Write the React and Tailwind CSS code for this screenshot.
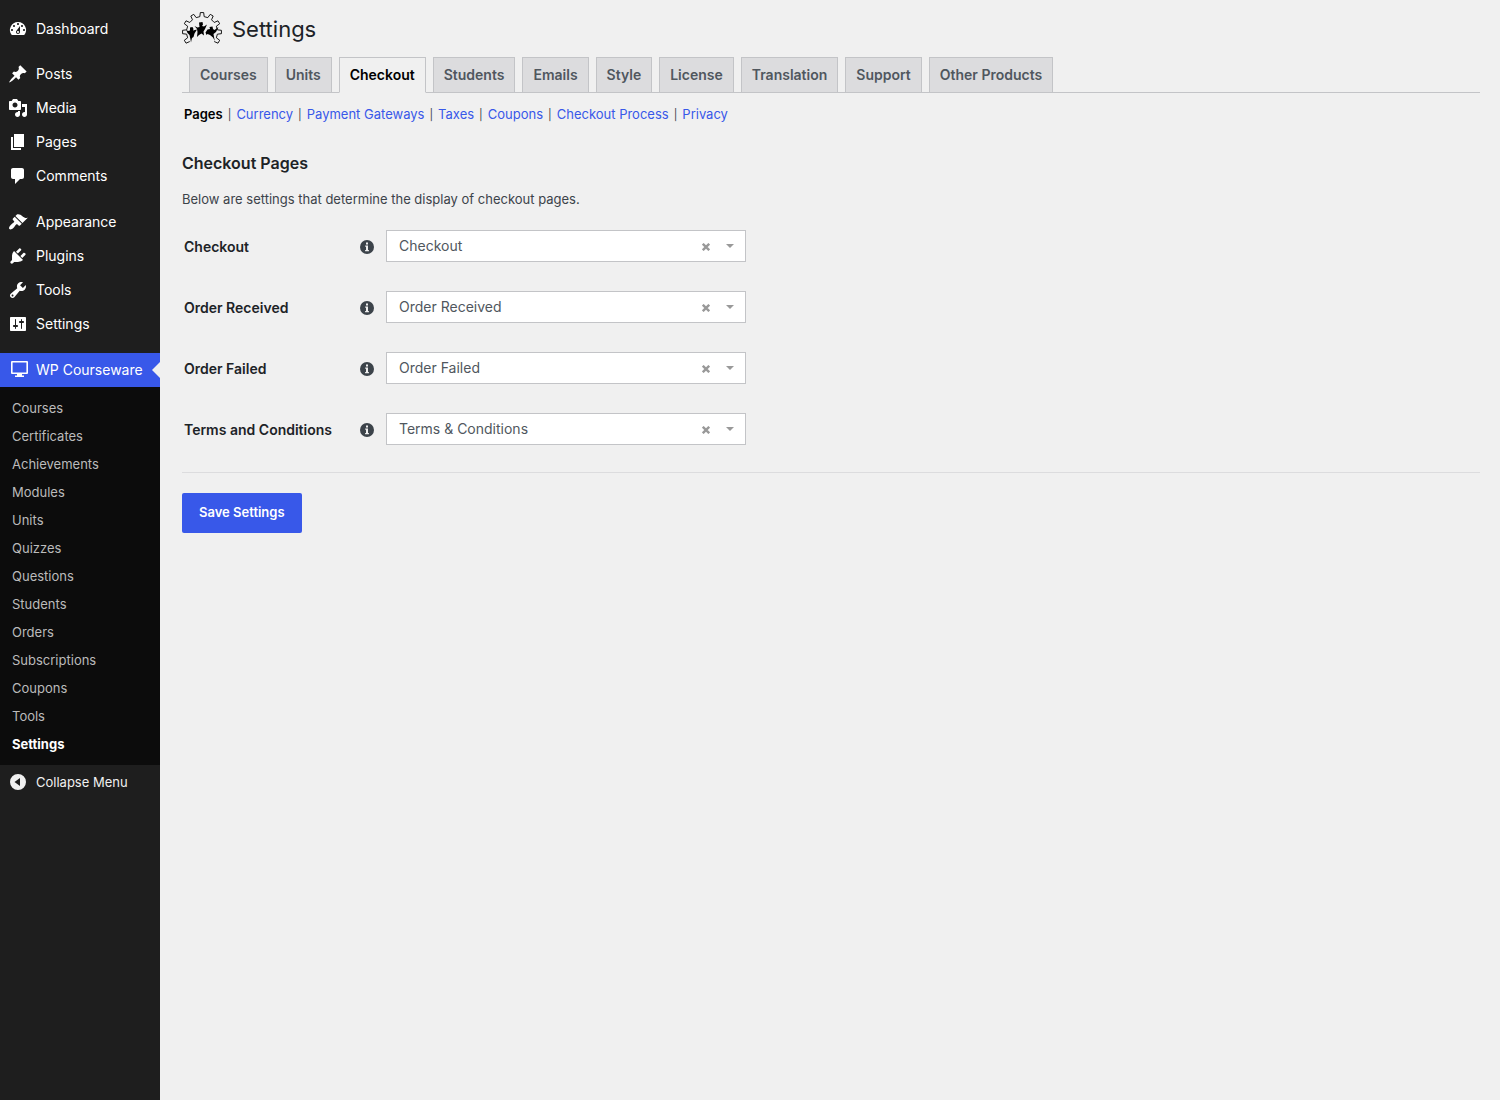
import { Fragment } from 'react'
import clsx from 'clsx'

const icons = {
  dashboard:
    'M3.76 16h12.48A7.998 7.998 0 0 0 10 3a7.998 7.998 0 0 0-6.24 13zM10 4c.55 0 1 .45 1 1s-.45 1-1 1-1-.45-1-1 .45-1 1-1zM6 6c.55 0 1 .45 1 1s-.45 1-1 1-1-.45-1-1 .45-1 1-1zm8 0c.55 0 1 .45 1 1s-.45 1-1 1-1-.45-1-1 .45-1 1-1zm-5.37 5.55L12 7v6c0 1.1-.9 2-2 2s-2-.9-2-2c0-.57.24-1.08.63-1.45zM4 10c.55 0 1 .45 1 1s-.45 1-1 1-1-.45-1-1 .45-1 1-1zm12 0c.55 0 1 .45 1 1s-.45 1-1 1-1-.45-1-1 .45-1 1-1zm-5 3c0-.55-.45-1-1-1s-1 .45-1 1 .45 1 1 1 1-.45 1-1z',
  post: 'M10.44 3.02l1.82-1.82 6.36 6.35-1.83 1.82c-1.05-.68-2.48-.57-3.41.36l-.75.75c-.92.93-1.04 2.35-.35 3.41l-1.83 1.82-2.41-2.41-2.8 2.79c-.42.42-3.38 2.71-3.8 2.29s1.86-3.39 2.28-3.81l2.79-2.79L4.1 9.36l1.83-1.82c1.05.69 2.48.57 3.4-.36l.75-.75c.93-.92 1.05-2.35.36-3.41z',
  media:
    'M13 11V4c0-.55-.45-1-1-1h-1.67L9 1H5L3.67 3H2c-.55 0-1 .45-1 1v7c0 .55.45 1 1 1h10c.55 0 1-.45 1-1zM7 4.5c1.38 0 2.5 1.12 2.5 2.5S8.38 9.5 7 9.5 4.5 8.38 4.5 7 5.62 4.5 7 4.5zM14 6h5v10.5c0 1.38-1.12 2.5-2.5 2.5S14 17.88 14 16.5s1.12-2.5 2.5-2.5c.17 0 .34.02.5.05V9h-3V6zm-4 8.05V13h2v3.5c0 1.38-1.12 2.5-2.5 2.5S7 17.88 7 16.5 8.12 14 9.5 14c.17 0 .34.02.5.05z',
  page: 'M6 15V2h10v13H6zm-1 1h8v2H3V5h2v11z',
  comments:
    'M5 2h9c1.1 0 2 .9 2 2v7c0 1.1-.9 2-2 2h-2l-5 5v-5H5c-1.1 0-2-.9-2-2V4c0-1.1.9-2 2-2z',
  appearance:
    'M14.48 11.06L7.41 3.99l1.5-1.5c.5-.56 2.3-.47 3.51.32 1.21.8 1.43 1.28 2.91 2.1 1.18.64 2.45 1.26 4.45.85zm-.71.71L6.7 4.7 4.93 6.47c-.39.39-.39 1.02 0 1.41l1.06 1.06c.39.39.39 1.03 0 1.42-.6.6-1.43 1.11-2.21 1.69-.35.26-.7.53-1.01.84C1.43 14.23.4 16.08 1.4 17.07c.99 1 2.84-.03 4.18-1.36.31-.31.58-.66.85-1.02.57-.78 1.08-1.61 1.69-2.21.39-.39 1.02-.39 1.41 0l1.06 1.06c.39.39 1.02.39 1.41 0z',
  plugins:
    'M13.11 4.36L9.87 7.6 8 5.73l3.24-3.24c.35-.34 1.05-.2 1.56.32.52.51.66 1.21.31 1.55zm-8 1.77l.91-1.12 9.01 9.01-1.19.84c-.71.71-2.63 1.16-3.82 1.16H6.14L4.9 17.26c-.59.59-1.54.59-2.12 0-.59-.58-.59-1.53 0-2.12l1.24-1.24v-3.88c0-1.13.4-3.19 1.09-3.89zm7.26 3.97l3.24-3.24c.34-.35 1.04-.21 1.55.31.52.51.66 1.21.31 1.55l-3.24 3.25z',
  tools:
    'M16.68 9.77c-1.34 1.34-3.3 1.67-4.95.99l-5.41 6.52c-.99.99-2.59.99-3.58 0s-.99-2.59 0-3.57l6.52-5.42c-.68-1.65-.35-3.61.99-4.95 1.28-1.28 3.12-1.62 4.72-1.06l-2.89 2.89 2.82 2.82 2.86-2.87c.53 1.58.18 3.39-1.08 4.65zM3.81 16.21c.4.39 1.04.39 1.43 0 .4-.4.4-1.04 0-1.43-.39-.4-1.03-.4-1.43 0-.39.39-.39 1.03 0 1.43z',
  settings:
    'M18 16V4c0-.55-.45-1-1-1H3c-.55 0-1 .45-1 1v12c0 .55.45 1 1 1h14c.55 0 1-.45 1-1zM8 11h1c.55 0 1 .45 1 1s-.45 1-1 1H8v1.5c0 .28-.22.5-.5.5s-.5-.22-.5-.5V13H6c-.55 0-1-.45-1-1s.45-1 1-1h1V5.5c0-.28.22-.5.5-.5s.5.22.5.5V11zm5-2h-1c-.55 0-1-.45-1-1s.45-1 1-1h1V5.5c0-.28.22-.5.5-.5s.5.22.5.5V7h1c.55 0 1 .45 1 1s-.45 1-1 1h-1v5.5c0 .28-.22.5-.5.5s-.5-.22-.5-.5V9z',
  desktop:
    'M4 1h15a1 1 0 0 1 1 1v11a1 1 0 0 1-1 1h-5v1.500h2V17H7v-1.500h2V14H4a1 1 0 0 1-1-1V2a1 1 0 0 1 1-1zM4.600 2.600v9.800h13.800V2.600z',
  collapse: 'M10 2a8 8 0 1 0 0 16 8 8 0 0 0 0-16zM12 6v8l-5.500-4z',
}

const menuGroups = [
  [{ label: 'Dashboard', icon: 'dashboard' }],
  [
    { label: 'Posts', icon: 'post' },
    { label: 'Media', icon: 'media' },
    { label: 'Pages', icon: 'page' },
    { label: 'Comments', icon: 'comments' },
  ],
  [
    { label: 'Appearance', icon: 'appearance' },
    { label: 'Plugins', icon: 'plugins' },
    { label: 'Tools', icon: 'tools' },
    { label: 'Settings', icon: 'settings' },
  ],
]

const submenu = [
  'Courses',
  'Certificates',
  'Achievements',
  'Modules',
  'Units',
  'Quizzes',
  'Questions',
  'Students',
  'Orders',
  'Subscriptions',
  'Coupons',
  'Tools',
  'Settings',
]

const tabs = [
  'Courses',
  'Units',
  'Checkout',
  'Students',
  'Emails',
  'Style',
  'License',
  'Translation',
  'Support',
  'Other Products',
]

const sections = [
  'Pages',
  'Currency',
  'Payment Gateways',
  'Taxes',
  'Coupons',
  'Checkout Process',
  'Privacy',
]

const fields = [
  { id: 'checkout', label: 'Checkout', value: 'Checkout' },
  { id: 'order-received', label: 'Order Received', value: 'Order Received' },
  { id: 'order-failed', label: 'Order Failed', value: 'Order Failed' },
  { id: 'terms', label: 'Terms and Conditions', value: 'Terms & Conditions' },
]

function Icon({ name }) {
  return (
    <svg viewBox="0 0 20 20" className="h-5 w-5 shrink-0" aria-hidden="true">
      <path d={icons[name]} fill="currentColor" fillRule="evenodd" />
    </svg>
  )
}

// Gear outline, open at the bottom: nine teeth, 30 degrees apart
function gearPath() {
  const at = (r, deg) => {
    const a = (deg * Math.PI) / 180
    return `${(20 + r * Math.sin(a)).toFixed(2)} ${(20 - r * Math.cos(a)).toFixed(2)}`
  }
  const points = []
  for (let t = -120; t <= 120; t += 30) {
    points.push(at(15.5, t - 8), at(19.5, t - 5), at(19.5, t + 5), at(15.5, t + 8))
  }
  return `M${points.join('L')}`
}

function Logo() {
  return (
    <svg viewBox="0 0 40 34" className="h-[34px] w-10 shrink-0" aria-hidden="true">
      <path d={gearPath()} fill="none" stroke="#000" strokeWidth="0.9" />
      <path d="M17 10.500l3.500-.5.500 2.500-1 1.500 2 .5 3-2-2 4.500-1.500 2.500.5 4-2.500-2-2.500 1.500-2 2 .5-5-.5-3-2.500-3 3 1.500 2-.5z" />
      <path d="M8 15.500l2.500-.5 1 2-.5 1.500 4-1-2.500 4-1 3.500-1.500 1-.5 2-.5 2.500-.8-4.500-.7-3-2-2-1.500-3.500L6 19l2-.5z" />
      <path d="M27.500 15l3-.5.5 2.500 1.500 1 4-3-2.500 5-2.500 2 .5 3 .8 4-1.800-3.500-3-2.500-2.500-1-1 1-1-2.500 2-3 2.500-.5z" />
    </svg>
  )
}

function Sidebar() {
  return (
    <nav className="w-40 shrink-0 bg-[#1e1e1e] pt-3 text-sm text-white">
      {menuGroups.map((group, i) => (
        <ul key={group[0].label} className={i === 0 ? 'mb-[11px]' : 'mb-3'}>
          {group.map((item) => (
            <li key={item.label}>
              <a href="#" className="flex h-[34px] items-center gap-2 px-2">
                <Icon name={item.icon} />
                {item.label}
              </a>
            </li>
          ))}
        </ul>
      ))}

      <a href="#" className="relative flex h-[34px] items-center gap-2 bg-[#3858e9] px-2">
        <Icon name="desktop" />
        WP Courseware
        <span className="absolute top-[9px] right-0 border-y-8 border-r-8 border-y-transparent border-r-[#f0f0f0]" />
      </a>
      <ul className="bg-[#0c0c0c] py-[7px] text-[13px] text-[#bbb]">
        {submenu.map((label) => (
          <li key={label}>
            <a
              href="#"
              className={clsx(
                'flex h-7 items-center px-3',
                label === 'Settings' && 'font-bold text-white'
              )}
            >
              {label}
            </a>
          </li>
        ))}
      </ul>
      <button
        type="button"
        className="flex h-[34px] w-full items-center gap-2 px-2 text-[13px] text-[#f0f0f0]"
      >
        <Icon name="collapse" />
        Collapse Menu
      </button>
    </nav>
  )
}

function PageSelect({ id, label, value }) {
  return (
    <div className="flex h-8 items-center">
      <div className="flex items-center pt-0.5">
        <label htmlFor={id} className="w-44 pl-0.5 text-sm font-semibold text-[#1d2327]">
          {label}
        </label>
        <svg viewBox="0 0 14 14" className="mr-3 ml-0.5 h-3.5 w-3.5" role="img" aria-label="Info">
          <circle cx="7" cy="7" r="7" fill="#3c434a" />
          <path d="M6 2.500h2v2H6zM5.200 5.500H8V10h.9v1.300H5.100V10H6V6.800h-.8z" fill="#f0f0f0" />
        </svg>
      </div>
      <div className="relative w-[360px]">
        <select
          id={id}
          defaultValue={value}
          className="h-8 w-full appearance-none border border-[#c3c4c7] bg-white pr-14 pl-3 text-sm text-[#50575e]"
        >
          <option>{value}</option>
        </select>
        <button
          type="button"
          aria-label={`Clear ${label}`}
          className="absolute top-[9px] right-8 flex h-4 w-4 items-center justify-center text-[#999]"
        >
          <svg viewBox="0 0 8 8" className="h-2 w-2" stroke="currentColor" strokeWidth="2.400">
            <path d="M.8.8l6.400 6.400M7.200.8L.8 7.200" />
          </svg>
        </button>
        <span className="pointer-events-none absolute top-3.5 right-3 border-x-4 border-t-4 border-x-transparent border-t-[#999]" />
      </div>
    </div>
  )
}

export default function App() {
  return (
    <div className="flex min-h-screen bg-[#f0f0f0] font-['Inter',sans-serif] text-[#3c434a]">
      <Sidebar />
      <main className="min-w-0 flex-1 pr-5 pl-[22px]">
        <header className="flex h-[57px] items-center gap-2.5">
          <Logo />
          <h1 className="pt-0.5 text-[22px] text-[#1d2327]">Settings</h1>
        </header>

        <div className="flex gap-[7px] border-b border-[#c3c4c7] pl-[7px]">
          {tabs.map((tab) => (
            <a
              key={tab}
              href="#"
              className={clsx(
                '-mb-px flex h-9 items-center border px-2.5 text-sm font-semibold whitespace-nowrap',
                tab === 'Checkout'
                  ? 'border-[#c3c4c7] border-b-[#f0f0f0] bg-[#f0f0f0] text-black'
                  : 'border-[#c3c4c7] bg-[#dcdcde] text-[#50575e]'
              )}
            >
              {tab}
            </a>
          ))}
        </div>

        <div className="mt-3 flex h-5 items-center gap-[5px] pl-0.5 text-[13px]">
          {sections.map((section, i) => (
            <Fragment key={section}>
              {i > 0 && <span className="text-[11px]">|</span>}
              <a href="#" className={i === 0 ? 'font-semibold text-black' : 'text-[#3858e9]'}>
                {section}
              </a>
            </Fragment>
          ))}
        </div>

        <h2 className="mt-[26px] text-base leading-6 font-semibold text-[#1d2327]">
          Checkout Pages
        </h2>
        <p className="mt-3.5 text-[13px] leading-5">
          Below are settings that determine the display of checkout pages.
        </p>

        <form>
          <div className="mt-[21px] flex flex-col gap-[29px] border-b border-[#dcdcde] pb-[27px]">
            {fields.map((field) => (
              <PageSelect key={field.id} {...field} />
            ))}
          </div>
          <button
            type="button"
            className="mt-5 h-10 rounded-xs bg-[#3858e9] px-[17px] text-[13px] font-semibold text-white"
          >
            Save Settings
          </button>
        </form>
      </main>
    </div>
  )
}
